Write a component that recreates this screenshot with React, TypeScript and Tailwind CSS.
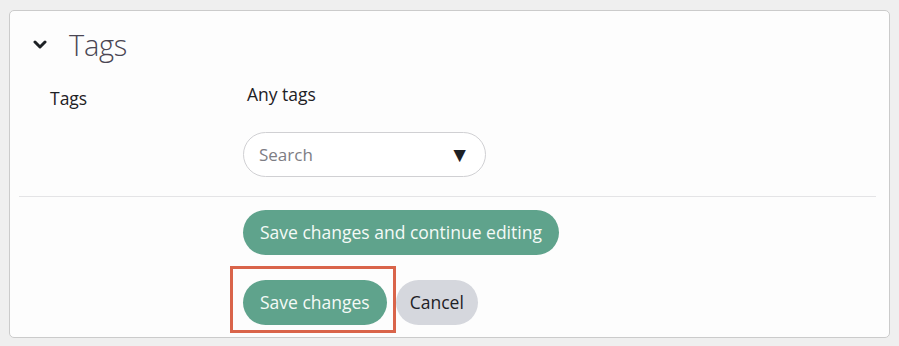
import React from "react";

export default function App() {
  return (
    <div className="min-h-screen w-full bg-[#efefef] pt-[10px] pl-[9px]" style={{ fontFamily: '"Open Sans", "Noto Sans", sans-serif' }}>
      <div className="w-[881px] h-[328px] rounded-[5px] border border-[#cbcbcb] bg-[#fdfdfd] flex flex-col">
        <div className="flex items-center pl-[23px] pt-[17px] h-[50px]">
          <svg width="14" height="10" viewBox="0 0 14 10" className="mt-[1px]">
            <path d="M2 2 L7 7 L12 2" fill="none" stroke="#1d2125" strokeWidth="3" strokeLinecap="round" strokeLinejoin="round" />
          </svg>
          <h3 className="ml-[22px] text-[29px] font-light leading-none text-[#4a4653] tracking-[-0.3px]">Tags</h3>
        </div>
        <div className="flex mt-[21px]">
          <div className="w-[233px] pl-[40px] pt-[4px] text-[17.5px] leading-[24px] text-[#1d2125]">Tags</div>
          <div className="flex flex-col">
            <div className="pl-[4px] text-[17.5px] leading-[24px] text-[#1d2125]">Any tags</div>
            <div className="mt-[26px] w-[243px] h-[45px] rounded-full border border-[#d0d0d3] bg-white flex items-center justify-between pl-[15px] pr-[15px]">
              <span className="text-[17px] text-[#7d7d84]">Search</span>
              <span className="text-[21px] text-[#1d2125] leading-none">▼</span>
            </div>
          </div>
        </div>
        <div className="mt-[19px] ml-[9px] mr-[13px] h-px bg-[#e4e4e6]" />
        <div className="pl-[233px] mt-[13px] flex flex-col items-start">
          <button className="h-[45px] px-[17px] rounded-full bg-[#5fa38c] text-[17.5px] text-[#f4faf7] whitespace-nowrap">
            Save changes and continue editing
          </button>
          <div className="mt-[11px] flex items-start">
            <div className="border-[3px] border-[#d9644a] pl-[10px] pr-[6px] pt-[11px] pb-[5px] -ml-[13px]">
              <button className="h-[45px] px-[17px] rounded-full bg-[#5fa38c] text-[17.5px] text-[#f4faf7] whitespace-nowrap">
                Save changes
              </button>
            </div>
            <button className="mt-[14px] h-[45px] px-[14px] rounded-full bg-[#d5d7dd] text-[17.5px] text-[#1d2125] whitespace-nowrap">
              Cancel
            </button>
          </div>
        </div>
      </div>
    </div>
  );
}
